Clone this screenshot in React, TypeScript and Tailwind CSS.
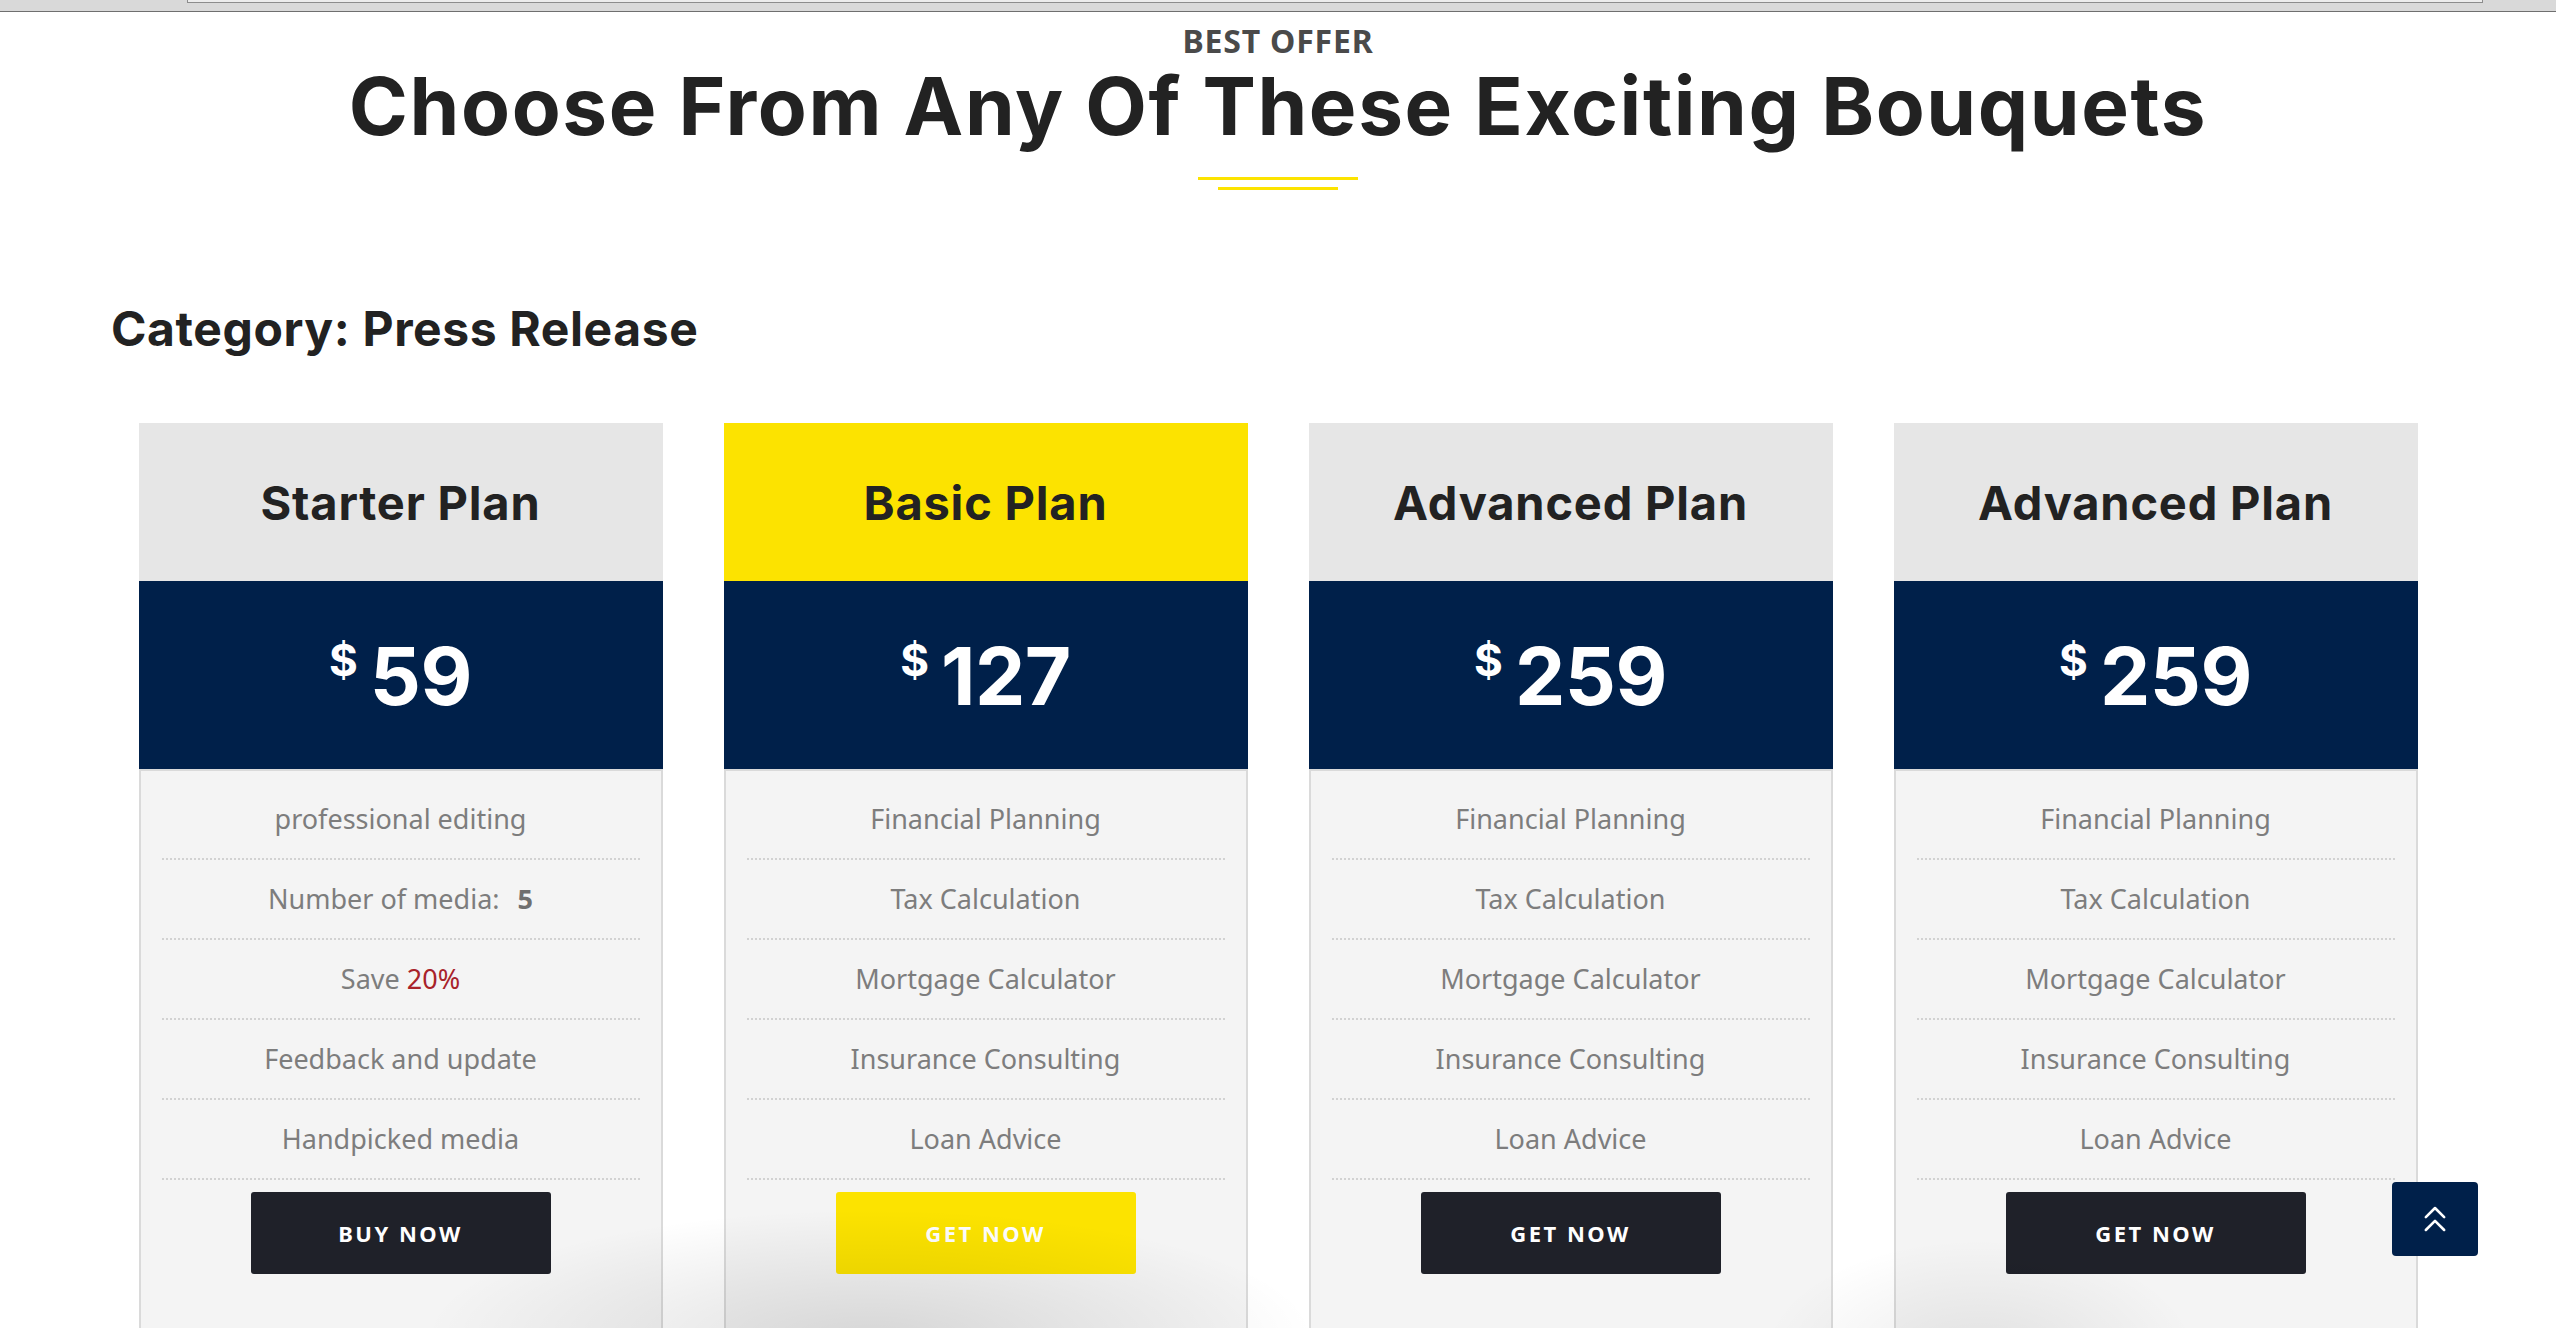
import React from "react";
import { ChevronsUp } from "lucide-react";

type Plan = {
  name: string;
  price: string;
  highlight?: boolean;
  cta: string;
  features: React.ReactNode[];
};

const financeFeatures = [
  "Financial Planning",
  "Tax Calculation",
  "Mortgage Calculator",
  "Insurance Consulting",
  "Loan Advice",
];

const plans: Plan[] = [
  {
    name: "Starter Plan",
    price: "59",
    cta: "BUY NOW",
    features: [
      "professional editing",
      <>
        Number of media:<span className="ml-[18px] font-bold text-[#6f6f6f]">5</span>
      </>,
      <>
        Save <span className="text-[#a8232a]">20%</span>
      </>,
      "Feedback and update",
      "Handpicked media",
    ],
  },
  { name: "Basic Plan", price: "127", highlight: true, cta: "GET NOW", features: financeFeatures },
  { name: "Advanced Plan", price: "259", cta: "GET NOW", features: financeFeatures },
  { name: "Advanced Plan", price: "259", cta: "GET NOW", features: financeFeatures },
];

const heading = { fontFamily: "Inter, 'Noto Sans', sans-serif" };
const body = { fontFamily: "'Noto Sans', 'Open Sans', sans-serif" };

function PlanCard({ plan }: { plan: Plan }) {
  return (
    <div className="flex w-[524px] flex-col">
      {/* Title */}
      <div
        className={`flex h-[158px] items-center justify-center ${
          plan.highlight ? "bg-[#fce300]" : "bg-[#e6e6e6]"
        }`}
      >
        <h3 className="text-[47px] font-bold leading-none tracking-[0.8px] text-[#222]" style={heading}>
          {plan.name}
        </h3>
      </div>

      {/* Price */}
      <div className="flex h-[188px] items-center justify-center bg-[#00204a] text-white" style={heading}>
        <div className="flex items-start gap-[12px] pt-[2px]">
          <span className="mt-[2px] text-[44px] font-bold leading-none">$</span>
          <span className="text-[80px] font-bold leading-none tracking-[-0.5px]">{plan.price}</span>
        </div>
      </div>

      {/* Features */}
      <div className="flex h-[600px] flex-col border-2 border-[#dadada] bg-[#f4f4f4] px-[21px] pt-[9px]" style={body}>
        {plan.features.map((f, i) => (
          <div
            key={i}
            className="flex h-[80px] items-center justify-center border-b-2 border-dotted border-[#d2d2d2] text-[27px] text-[#7d7d7d]"
          >
            <span>{f}</span>
          </div>
        ))}
        <div className="mt-[12px] flex justify-center">
          <button
            className={`h-[82px] w-[300px] rounded-[3px] text-[22px] font-bold tracking-[2.5px] text-white ${
              plan.highlight ? "bg-[#fce300]" : "bg-[#1f2129]"
            }`}
          >
            {plan.cta}
          </button>
        </div>
      </div>
    </div>
  );
}

export default function App() {
  return (
    <div className="relative h-screen overflow-hidden bg-white">
      {/* top strip */}
      <div className="h-[12px] border-b border-[#6f6f6f] bg-[#d9d9d9] pl-[187px]">
        <div className="h-[3px] w-[2296px] border-b border-l border-r border-[#8c8c8c] bg-[#ececec]" />
      </div>

      <section className="text-center">
        <p className="mt-[13px] text-[32px] font-bold leading-none tracking-[0.8px] text-[#4a4a4a]" style={body}>
          BEST OFFER
        </p>
        <h2 className="mt-[9px] text-[80px] font-bold leading-none tracking-[1.6px] text-[#222]" style={heading}>
          Choose From Any Of These Exciting Bouquets
        </h2>
        <div className="mt-[31px] flex flex-col items-center gap-[7px]">
          <div className="h-[3px] w-[160px] bg-[#fce300]" />
          <div className="h-[3px] w-[120px] bg-[#fce300]" />
        </div>
      </section>

      <div className="mx-auto w-[2334px]">
        <h2 className="mt-[115px] text-[48px] font-bold leading-none tracking-[0.6px] text-[#222]" style={heading}>
          Category: Press Release
        </h2>

        <div className="mt-[70px] flex justify-center gap-[61px]">
          {plans.map((p, i) => (
            <PlanCard key={i} plan={p} />
          ))}
        </div>
      </div>

      {/* soft floor shadow */}
      <div className="pointer-events-none absolute bottom-[-140px] left-[420px] h-[260px] w-[900px] rounded-full bg-[radial-gradient(ellipse_at_center,rgba(0,0,0,0.12),rgba(0,0,0,0)_70%)]" />
      <div className="pointer-events-none absolute bottom-[-150px] left-[1760px] h-[240px] w-[440px] rounded-full bg-[radial-gradient(ellipse_at_center,rgba(0,0,0,0.08),rgba(0,0,0,0)_70%)]" />

      {/* back to top */}
      <button className="fixed bottom-[72px] right-[78px] flex h-[74px] w-[86px] items-center justify-center rounded-[4px] bg-[#00204a] text-white">
        <ChevronsUp className="h-[44px] w-[44px]" strokeWidth={1.4} />
      </button>
    </div>
  );
}
